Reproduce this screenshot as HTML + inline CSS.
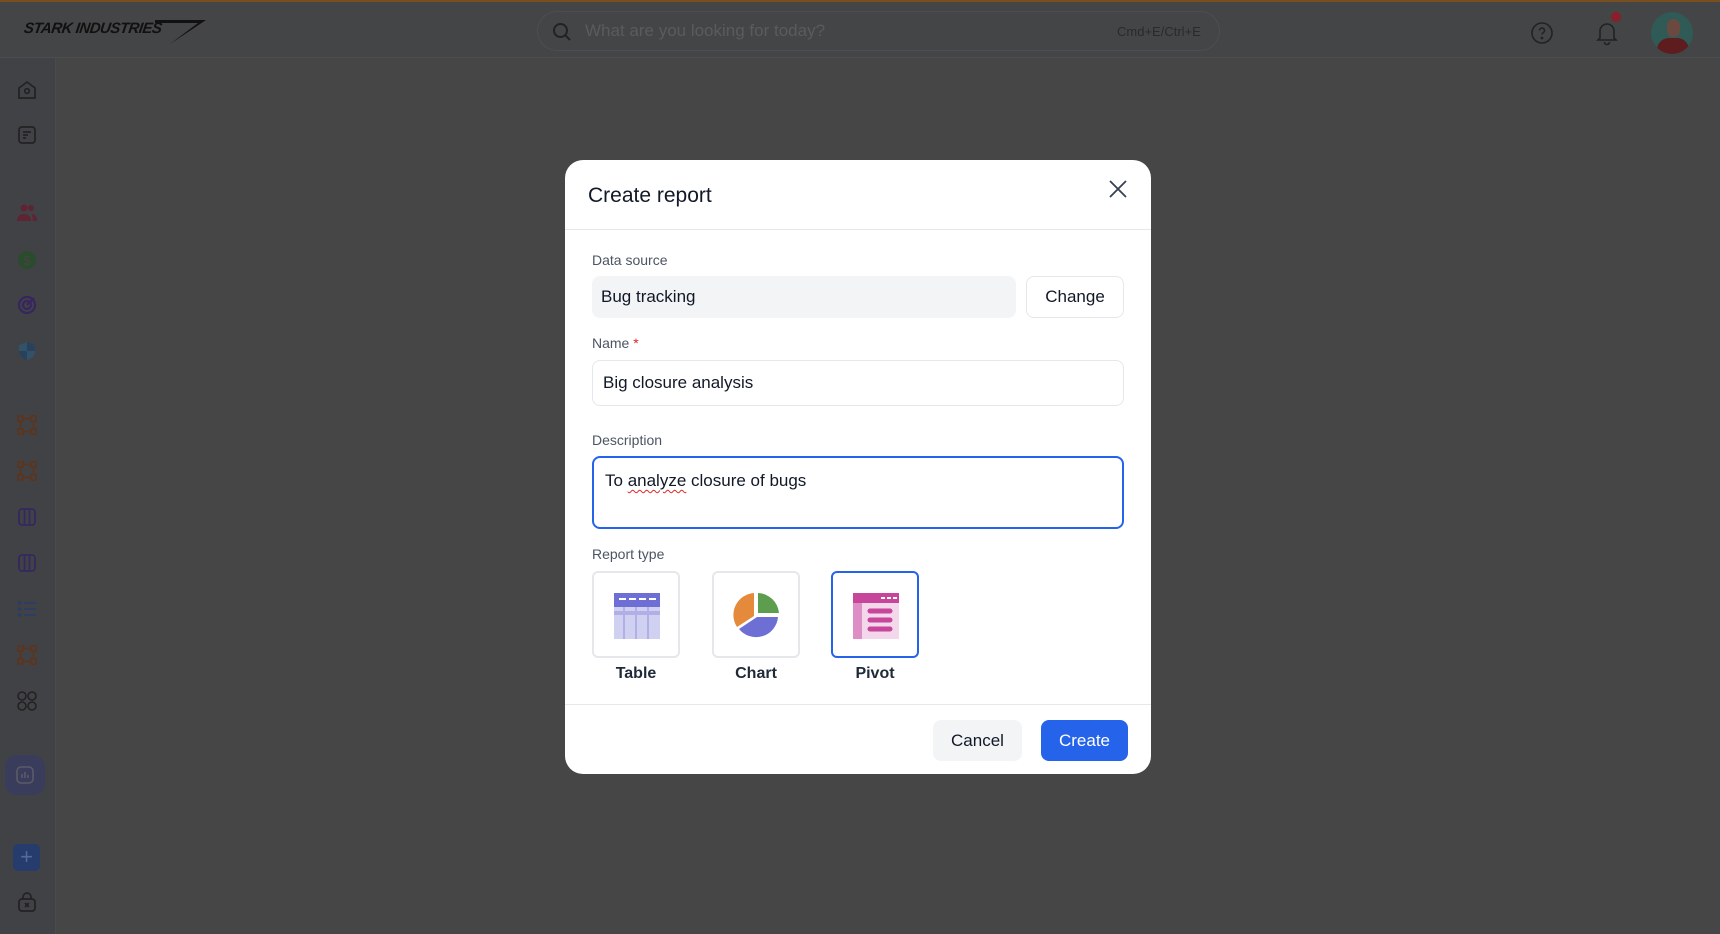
<!DOCTYPE html>
<html><head><meta charset="utf-8"><style>
*{box-sizing:border-box;margin:0;padding:0}
body{width:1720px;height:934px;overflow:hidden;background:#464646;font-family:"Liberation Sans",sans-serif;position:relative}
.top{position:absolute;left:0;top:0;width:1720px;height:58px;background:#444547;border-top:2px solid #7a4f1e;border-bottom:1px solid #4c4d50}
.side{position:absolute;left:0;top:58px;width:56px;height:876px;background:#414246;border-right:1px solid #4a4b4f}
.ic{position:absolute;left:16px;width:22px;height:22px}
.abs{position:absolute}
.modal{position:absolute;left:565px;top:160px;width:586px;height:614px;background:#fff;border-radius:18px;overflow:hidden}
.lbl{position:absolute;left:27px;font-size:14px;color:#4b5563}
.inp{position:absolute;left:27px;border-radius:8px;font-size:17px;color:#111827;padding-left:10px;display:flex;align-items:center}
.card{position:absolute;top:411px;width:88px;height:87px;border:2px solid #e5e7eb;border-radius:6px;display:flex;align-items:center;justify-content:center}
.cl{position:absolute;top:505px;width:88px;text-align:center;font-size:16px;color:#1f2937;font-weight:bold}
</style></head><body>
<div class="top">
  <div class="abs" style="left:24px;top:18px;font-family:'Liberation Sans';font-weight:bold;font-style:italic;font-size:15px;color:#111;letter-spacing:-0.5px;transform:skewX(-8deg)">STARK INDUSTRIES</div>
  <svg class="abs" style="left:150px;top:16px" width="60" height="28"><path d="M5 2 L56 2 L20 26 L48 5 L5 5Z" fill="#111"/></svg>
  <div class="abs" style="left:537px;top:9px;width:683px;height:40px;border:1px solid #4d4e51;border-radius:20px"></div>
  <svg class="abs" style="left:552px;top:20px" width="20" height="20" fill="none" stroke="#222" stroke-width="2"><circle cx="8.5" cy="8.5" r="6.5"/><path d="M13.5 13.5 L18 18"/></svg>
  <div class="abs" style="left:585px;top:19px;font-size:17px;color:#5a5b5e">What are you looking for today?</div>
  <div class="abs" style="left:1117px;top:22px;font-size:13px;color:#2a2a2a">Cmd+E/Ctrl+E</div>
  <svg class="abs" style="left:1530px;top:19px" width="24" height="24" fill="none" stroke="#222" stroke-width="1.6"><circle cx="12" cy="12" r="10"/><path d="M9.5 9.5a2.5 2.5 0 1 1 3.5 2.3c-.7.4-1 .9-1 1.7"/><circle cx="12" cy="17" r=".6" fill="#222"/></svg>
  <svg class="abs" style="left:1594px;top:17px" width="26" height="28" fill="none" stroke="#222" stroke-width="1.6"><path d="M6 19V12a7 7 0 0 1 14 0v7l2 2H4z"/><path d="M10.5 23a2.5 2.5 0 0 0 5 0"/></svg>
  <div class="abs" style="left:1611px;top:10px;width:10px;height:10px;border-radius:50%;background:#8a1f2a"></div>
  <div class="abs" style="left:1651px;top:10px;width:42px;height:42px;border-radius:50%;background:#2f5a56;overflow:hidden"><div style="position:absolute;left:6px;top:26px;width:32px;height:20px;border-radius:12px 12px 0 0;background:#5e1c1e"></div><div style="position:absolute;left:16px;top:7px;width:13px;height:18px;border-radius:7px;background:#6a4a40"></div></div>
</div>
<div class="side">
  <svg class="ic" style="top:21px" viewBox="0 0 22 22" fill="none" stroke="#222" stroke-width="1.7"><path d="M3 9 L11 3 L19 9 V19 H3Z"/><circle cx="11" cy="12" r="2.3"/></svg>
  <svg class="ic" style="top:66px" viewBox="0 0 22 22" fill="none" stroke="#222" stroke-width="1.7"><rect x="3" y="3" width="16" height="16" rx="3"/><path d="M7 8h8M7 11h5M7 14h3"/></svg>
  <svg class="ic" style="top:144px" viewBox="0 0 22 22" fill="#5e2432"><circle cx="8" cy="6" r="3.5"/><path d="M1 19c0-5 3-7 7-7s7 2 7 7z"/><circle cx="15" cy="6" r="3"/><path d="M16 12c3 0 5 2 5 7h-4z"/></svg>
  <svg class="ic" style="top:191px" viewBox="0 0 22 22"><circle cx="11" cy="11" r="9" fill="#2a4c2c"/><text x="11" y="16" font-size="13" text-anchor="middle" fill="#444" font-family="Liberation Sans">$</text></svg>
  <svg class="ic" style="top:236px" viewBox="0 0 22 22" fill="none" stroke="#36255e" stroke-width="2.2"><circle cx="11" cy="11" r="8"/><circle cx="11" cy="11" r="4"/><path d="M11 11 L18 4"/></svg>
  <svg class="ic" style="top:282px" viewBox="0 0 22 22"><path d="M11 2 L19 5 V11 C19 16 15 19 11 20 C7 19 3 16 3 11 V5Z" fill="#27425a"/><path d="M11 2 V11 H3 V5Z M11 11 H19 C19 16 15 19 11 20Z" fill="#33526a"/></svg>
  <svg class="ic" style="top:356px" viewBox="0 0 22 22" fill="none" stroke="#5c3520" stroke-width="1.8"><rect x="2" y="2" width="5" height="5"/><rect x="15" y="2" width="5" height="5"/><rect x="2" y="15" width="5" height="5"/><rect x="15" y="15" width="5" height="5"/><path d="M7 4.5h8M7 17.5h8M4.5 7v8M17.5 7v8"/></svg>
  <svg class="ic" style="top:402px" viewBox="0 0 22 22" fill="none" stroke="#5c3520" stroke-width="1.8"><rect x="2" y="2" width="5" height="5"/><rect x="15" y="2" width="5" height="5"/><rect x="2" y="15" width="5" height="5"/><rect x="15" y="15" width="5" height="5"/><path d="M7 4.5h8M7 17.5h8M4.5 7v8M17.5 7v8"/></svg>
  <svg class="ic" style="top:448px" viewBox="0 0 22 22" fill="none" stroke="#35285e" stroke-width="1.8"><rect x="3" y="3" width="16" height="16" rx="3"/><path d="M8.5 3v16M13.5 3v16"/></svg>
  <svg class="ic" style="top:494px" viewBox="0 0 22 22" fill="none" stroke="#35285e" stroke-width="1.8"><rect x="3" y="3" width="16" height="16" rx="3"/><path d="M8.5 3v16M13.5 3v16"/></svg>
  <svg class="ic" style="top:540px" viewBox="0 0 22 22" fill="none" stroke="#2b3d66" stroke-width="1.8"><path d="M8 5h12M8 11h12M8 17h12"/><circle cx="3.5" cy="5" r="1" fill="#2b3d66"/><circle cx="3.5" cy="11" r="1" fill="#2b3d66"/><circle cx="3.5" cy="17" r="1" fill="#2b3d66"/></svg>
  <svg class="ic" style="top:586px" viewBox="0 0 22 22" fill="none" stroke="#5c3520" stroke-width="1.8"><rect x="2" y="2" width="5" height="5"/><rect x="15" y="2" width="5" height="5"/><rect x="2" y="15" width="5" height="5"/><rect x="15" y="15" width="5" height="5"/><path d="M7 4.5h8M7 17.5h8M4.5 7v8M17.5 7v8"/></svg>
  <svg class="ic" style="top:632px" viewBox="0 0 22 22" fill="none" stroke="#222" stroke-width="1.6"><circle cx="6" cy="6" r="4"/><circle cx="16" cy="6" r="4"/><circle cx="6" cy="16" r="4"/><circle cx="16" cy="16" r="4"/></svg>
  <div class="abs" style="left:5px;top:697px;width:40px;height:40px;border-radius:12px;background:#3a3c5c"></div>
  <svg class="abs" style="left:15px;top:707px" width="20" height="20" fill="none" stroke="#5a5b66" stroke-width="1.6"><rect x="2" y="2" width="16" height="16" rx="4"/><path d="M7 13V9M10 13V7M13 13v-3"/></svg>
  <div class="abs" style="left:13px;top:786px;width:27px;height:27px;border-radius:5px;background:#263c6c;color:#55699a;font-size:22px;line-height:25px;text-align:center">+</div>
  <svg class="ic" style="top:833px" viewBox="0 0 22 22" fill="none" stroke="#222" stroke-width="1.7"><path d="M7 8V6a4 4 0 0 1 8 0v2"/><rect x="3" y="8" width="16" height="12" rx="3"/><path d="M9 12l4 4M13 12l-4 4"/></svg>
</div>
<div class="modal">
  <div class="abs" style="left:23px;top:24px;font-size:21px;color:#111827">Create report</div>
  <svg class="abs" style="left:543px;top:19px" width="20" height="20" stroke="#374151" stroke-width="1.8"><path d="M2 2L18 18M18 2L2 18"/></svg>
  <div class="abs" style="left:0;top:69px;width:586px;height:1px;background:#e5e7eb"></div>
  <div class="lbl" style="top:92px">Data source</div>
  <div class="inp" style="top:116px;width:424px;height:42px;background:#f3f4f6;padding-left:9px">Bug tracking</div>
  <div class="abs" style="left:461px;top:116px;width:98px;height:42px;border:1px solid #e5e7eb;border-radius:8px;font-size:17px;color:#111827;display:flex;align-items:center;justify-content:center">Change</div>
  <div class="lbl" style="top:175px">Name <span style="color:#dc2626">*</span></div>
  <div class="inp" style="top:200px;width:532px;height:46px;border:1px solid #e5e7eb">Big closure analysis</div>
  <div class="lbl" style="top:272px">Description</div>
  <div class="abs" style="left:27px;top:296px;width:532px;height:73px;border:2px solid #2563eb;border-radius:8px;font-size:17px;color:#111827;padding:13px 0 0 11px">To <span style="text-decoration:underline wavy #dc2626;text-underline-offset:3px;text-decoration-thickness:1px">analyze</span> closure of bugs</div>
  <div class="lbl" style="top:386px">Report type</div>
  <div class="card" style="left:27px"><svg width="48" height="48"><rect x="2" y="2" width="46" height="14" fill="#6e6fd4"/><path d="M7 8h7M17 8h7M27 8h7M37 8h7" stroke="#fff" stroke-width="2"/><rect x="2" y="16" width="46" height="32" fill="#d0d0f0"/><rect x="2" y="20" width="46" height="4" fill="#b0b0e6"/><path d="M12 16v32M24 16v32M36 16v32" stroke="#b0b0e6" stroke-width="2"/></svg></div>
  <div class="card" style="left:147px"><svg width="50" height="50" viewBox="0 0 50 50"><path d="M27 3 A22 22 0 0 1 48 23 H27Z" fill="#5c9e4e"/><path d="M47 27 A22 22 0 0 1 8 39 L26 27Z" fill="#6e6fd4"/><path d="M23 3 V26 L6 37 A22 22 0 0 1 23 3Z" fill="#e58a3a"/></svg></div>
  <div class="card" style="left:266px;border-color:#2563eb"><svg width="48" height="48"><rect x="2" y="2" width="46" height="10" fill="#c7459a"/><path d="M30 7h4M36 7h4M42 7h4" stroke="#fff" stroke-width="2"/><rect x="2" y="12" width="9" height="36" fill="#dd8ec4"/><rect x="11" y="12" width="37" height="36" fill="#f2d8ea"/><path d="M19 20h20M19 29h20M19 38h20" stroke="#c7459a" stroke-width="5" stroke-linecap="round"/></svg></div>
  <div class="cl" style="left:27px">Table</div>
  <div class="cl" style="left:147px">Chart</div>
  <div class="cl" style="left:266px">Pivot</div>
  <div class="abs" style="left:0;top:544px;width:586px;height:1px;background:#e5e7eb"></div>
  <div class="abs" style="left:368px;top:560px;width:89px;height:41px;border-radius:8px;background:#f3f4f6;font-size:17px;color:#111827;display:flex;align-items:center;justify-content:center">Cancel</div>
  <div class="abs" style="left:476px;top:560px;width:87px;height:41px;border-radius:8px;background:#2563eb;font-size:17px;color:#fff;display:flex;align-items:center;justify-content:center">Create</div>
</div>
</body></html>
